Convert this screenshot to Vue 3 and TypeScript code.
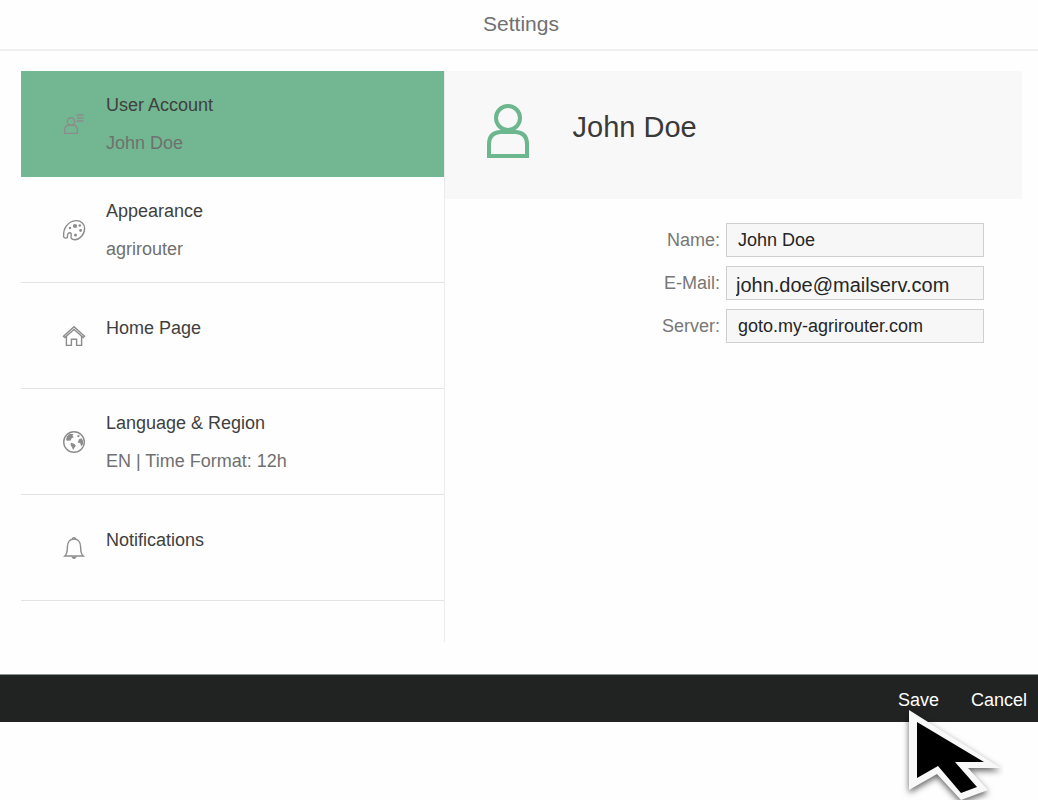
<script setup lang="ts">
import { ref } from 'vue'

interface Section {
  id: string
  title: string
  detail?: string
}

const sections: Section[] = [
  { id: 'account', title: 'User Account', detail: 'John Doe' },
  { id: 'appearance', title: 'Appearance', detail: 'agrirouter' },
  { id: 'home', title: 'Home Page' },
  { id: 'language', title: 'Language & Region', detail: 'EN | Time Format: 12h' },
  { id: 'notifications', title: 'Notifications' },
]

const selected = ref('account')
const name = ref('John Doe')
const email = ref('john.doe@mailserv.com')
const server = ref('goto.my-agrirouter.com')
</script>

<template>
  <div class="settings">
    <header class="title-bar">
      <h1>Settings</h1>
    </header>

    <main class="content">
      <nav class="sections" aria-label="Settings sections">
        <button
          v-for="section in sections"
          :key="section.id"
          type="button"
          class="section"
          :class="{ selected: section.id === selected }"
          @click="selected = section.id"
        >
          <svg class="icon" viewBox="0 0 24 24" aria-hidden="true">
            <g v-if="section.id === 'account'">
              <circle cx="9" cy="9.500" r="3.700" />
              <path d="M2.600 21.400v-3.200c0-3 2-4.900 4.600-4.900h3.600c2.600 0 4.600 1.900 4.600 4.900v3.200z" />
              <path d="M14.600 3h7M14.600 6h7M14.600 9h7" />
            </g>
            <g v-else-if="section.id === 'appearance'">
              <path d="M1.600 18.300C1 10.500 6 3 14 2.600c4.800-.2 8.600 3.200 8.600 7.700 0 6.200-4.700 11.400-9.700 11.400-3.600 0-4.400-1.800-3.800-4 .5-2-.1-3.200-1.700-3-1.800.2-2 1.800-2.100 5-1.800.9-3.600.2-3.700-1.400z" />
              <g class="solid">
                <circle cx="13" cy="8" r="2.100" />
                <circle cx="8" cy="10" r="1.200" />
                <circle cx="17.800" cy="7.500" r="1.300" />
                <circle cx="18.600" cy="12.500" r="1.400" />
                <circle cx="13.500" cy="17" r="1.500" />
              </g>
            </g>
            <g v-else-if="section.id === 'home'">
              <path d="M1.500 12.300L12 2.700l10.500 9.600-1.300 1.200L12 5.400l-9.200 8.100z" />
              <path d="M4.400 12v9.400h5v-6.200h5.200v6.200h5V12" />
            </g>
            <g v-else-if="section.id === 'language'">
              <circle cx="12" cy="12" r="10.300" />
              <g class="solid">
                <path d="M5.200 6l2.600-2.200 3.500.2-.8 2 1.300 1.300-2.200 1-1.100 2.500-2-.3-1.500.6-1-1.900z" />
                <path d="M8.800 12.800l3.400.9 1.700 1.700-1.500 2.300-1.200 2.300-1.300-2.700-1.300-2.200z" />
                <path d="M16 4.700l1.800 1-1 1.500-1.800-.7z" />
                <path d="M17 9.300l2.300-1.100 1.600 2.300.2 3.500-1.900 2.600-.9-3.400-2.600-.8z" />
              </g>
            </g>
            <g v-else>
              <path d="M2.800 20c2.600-2.200 2.500-4.500 2.600-9.200C5.500 5.800 8.300 3 12 3s6.500 2.800 6.600 7.800c.1 4.700 0 7 2.600 9.200z" />
              <path d="M10.500 3c0-1.900 3-1.900 3 0" />
              <path class="solid" d="M9.300 20.500h5.400c-.7 3.200-4.700 3.200-5.400 0z" />
            </g>
          </svg>
          <span class="labels">
            <span class="name">{{ section.title }}</span>
            <span v-if="section.detail" class="detail">{{ section.detail }}</span>
          </span>
        </button>
      </nav>

      <section class="pane">
        <div class="profile">
          <svg class="avatar" viewBox="0 0 42 54" aria-hidden="true">
            <circle cx="21" cy="14" r="12" />
            <path d="M2 52V40q0-11 11-12h16q11 1 11 12v12z" />
          </svg>
          <h2>John Doe</h2>
        </div>
        <form class="form" @submit.prevent>
          <label for="name">Name:</label>
          <input id="name" v-model="name" type="text" />
          <label for="email">E-Mail:</label>
          <input id="email" v-model="email" class="email" type="email" />
          <label for="server">Server:</label>
          <input id="server" v-model="server" type="text" />
        </form>
      </section>
    </main>

    <footer class="actions">
      <div class="save">
        <button type="button">Save</button>
        <svg class="pointer" viewBox="0 0 104 100" aria-hidden="true">
          <path class="edge" d="M9 10v80l28-16 24 26 27-10-20-22h33z" />
          <path d="M17 22v56l21-12 23 27 16-6-22-25 29 0z" />
        </svg>
      </div>
      <button type="button">Cancel</button>
    </footer>
  </div>
</template>

<style>
body {
  margin: 0;
  background: #fefefe;
}
</style>

<style scoped>
.settings {
  box-sizing: border-box;
  min-height: 100vh;
  overflow: hidden;
  font: 18px/20px "Liberation Sans", Arial, sans-serif;
  color: #3f3f3f;
}

button,
input {
  box-sizing: border-box;
  margin: 0;
  font: inherit;
  border-radius: 0;
}

button {
  padding: 0;
  border: 0;
  background: none;
  cursor: pointer;
}

.title-bar {
  padding: 12px 0 13px;
  border-bottom: 2px solid #efefef;
  text-align: center;
}

h1 {
  margin: 0;
  padding-left: 4px;
  font-size: 21px;
  line-height: 24px;
  font-weight: 400;
  color: #707070;
}

.content {
  display: grid;
  grid-template-columns: 11fr 15fr;
  padding: 20px 16px 32px 21px;
}

.sections {
  padding-bottom: 41px;
  border-right: 1px solid #ebebeb;
}

.section {
  display: flex;
  align-items: center;
  gap: 20px;
  box-sizing: border-box;
  width: 100%;
  height: 106px;
  padding: 0 41px;
  border-bottom: 1px solid #e3e3e3;
  text-align: left;
}

.section.selected {
  background: #72b791;
  border-color: #72b791;
}

.icon {
  flex: none;
  width: 24px;
  height: 24px;
  fill: none;
  stroke: #8c8c8c;
  stroke-width: 1.400;
}

.solid {
  fill: #8c8c8c;
  stroke: none;
}

.labels {
  display: flex;
  flex-direction: column;
}

.name {
  line-height: 38px;
  color: #404040;
}

.name:only-child {
  padding-bottom: 16px;
}

.detail {
  line-height: 38px;
  color: #707070;
}

.profile {
  display: flex;
  align-items: center;
  gap: 44px;
  box-sizing: border-box;
  height: 128px;
  padding: 0 42px 8px;
  background: #f8f8f8;
}

.avatar {
  width: 42px;
  height: 54px;
  fill: none;
  stroke: #6db78e;
  stroke-width: 4;
}

h2 {
  margin: 0;
  padding-bottom: 8px;
  font-size: 29px;
  line-height: 36px;
  font-weight: 400;
  color: #3a3a3a;
}

.form {
  display: grid;
  grid-template-columns: 1fr 258px;
  gap: 9px 6px;
  align-items: center;
  padding: 24px 38px 0 0;
}

.form label {
  text-align: right;
  color: #777;
}

.form input {
  width: 100%;
  height: 34px;
  padding: 0 11px;
  border: 1px solid #cfcfcf;
  outline: 0;
  background: #f7f7f7;
  color: #262626;
}

.form .email {
  padding: 4px 9px 0;
  font-size: 20px;
}

.actions {
  display: flex;
  justify-content: flex-end;
  gap: 32px;
  padding: 15px 11px 12px;
  border-top: 1px solid #89948e;
  background: #202322;
}

.actions button {
  color: #fff;
}

.save {
  position: relative;
}

.pointer {
  position: absolute;
  top: 10px;
  left: 2px;
  width: 104px;
  height: 100px;
  pointer-events: none;
}

.edge {
  fill: #f8f8f8;
  filter: drop-shadow(0 3px 3px rgb(0 0 0 / 60%));
}
</style>
